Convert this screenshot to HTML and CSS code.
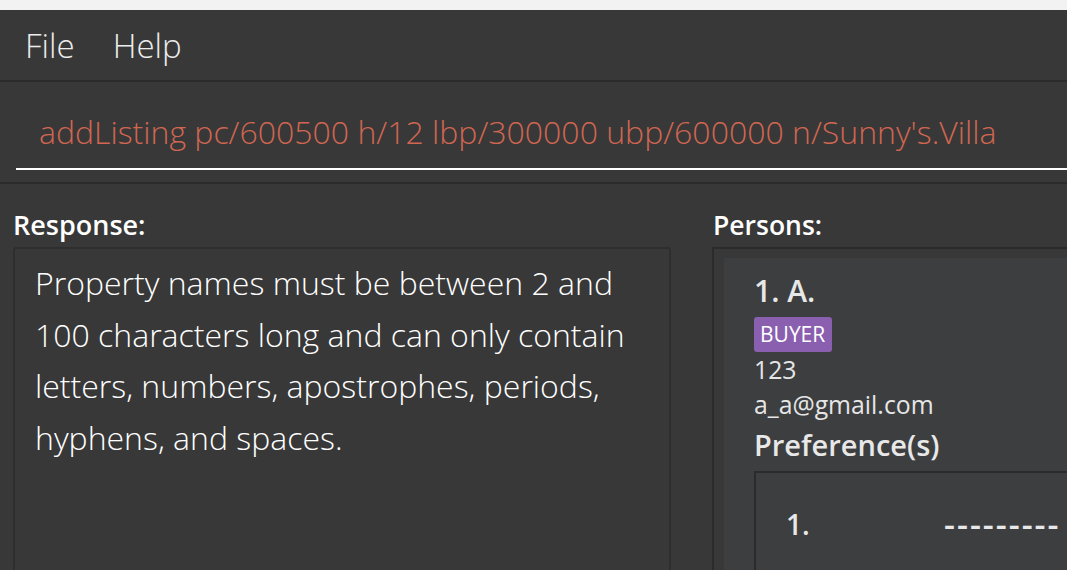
FILE: index.html
```html
<!DOCTYPE html>
<html>
<head>
<meta charset="utf-8">
<link rel="stylesheet" href="styles.css">
</head>
<body>
<div class="titlestrip"></div>
<div class="menubar">
  <span class="menu-item">File</span>
  <span class="menu-item">Help</span>
</div>
<div class="command">
  <div class="command-field">
    <span class="command-text error">addListing pc/600500 h/12 lbp/300000 ubp/600000 n/Sunny's.Villa</span>
  </div>
</div>
<div class="main">
  <section class="pane pane-left">
    <div class="pane-label">Response:</div>
    <div class="result-box">
      <p class="result-text">Property names must be between 2 and 100 characters long and can only contain letters, numbers, apostrophes, periods, hyphens, and spaces.</p>
    </div>
  </section>
  <section class="pane pane-right">
    <div class="pane-label">Persons:</div>
    <div class="list-box">
      <div class="card">
        <div class="card-name">1. A.</div>
        <div class="tags"><span class="tag">BUYER</span></div>
        <div class="card-line">123</div>
        <div class="card-line">a_a@gmail.com</div>
        <div class="card-heading">Preference(s)</div>
        <div class="pref-box">
          <div class="pref-row">
            <span class="pref-index">1.</span>
            <span class="pref-dashes">---------</span>
          </div>
        </div>
      </div>
    </div>
  </section>
</div>
</body>
</html>
```

FILE: styles.css
```css
html, body {
  margin: 0;
  padding: 0;
}
body {
  background: #383838;
  font-family: "Open Sans", "Noto Sans", sans-serif;
  color: #ffffff;
  overflow: hidden;
  width: 1067px;
  height: 570px;
}
.titlestrip {
  height: 10px;
  background: #f2f2f2;
}
.menubar {
  height: 70px;
  display: flex;
  align-items: center;
  padding-left: 25px;
  border-bottom: 2px solid #2b2b2b;
}
.menu-item {
  font-size: 33px;
  font-weight: 300;
  color: #ececec;
  margin-right: 38px;
  line-height: 1;
}
.command {
  height: 100px;
  border-bottom: 2px solid #2b2b2b;
}
.command-field {
  margin-left: 16px;
  height: 88px;
  box-sizing: border-box;
  padding-top: 14px;
  border-bottom: 2px solid #ffffff;
  display: flex;
  align-items: center;
  padding-left: 23px;
  white-space: nowrap;
}
.command-text {
  font-size: 32px;
  font-weight: 300;
  line-height: 1;
}
.error {
  color: #d06651;
}
.main {
  display: flex;
  padding-left: 13px;
  gap: 41px;
  width: 1400px;
}
.pane {
  display: flex;
  flex-direction: column;
}
.pane-left {
  width: 658px;
  flex: none;
}
.pane-right {
  width: 600px;
  flex: none;
}
.pane-label {
  font-size: 27px;
  font-weight: 600;
  color: #ffffff;
  line-height: 30px;
  margin-top: 26px;
  height: 37px;
}
.pane-right .pane-label {
  margin-left: 1px;
  font-size: 26.5px;
}
.result-box {
  height: 400px;
  border: 2px solid #2e2e2e;
  border-radius: 3px;
  padding: 8px 20px;
}
.result-text {
  margin: 0;
  font-size: 32px;
  font-weight: 300;
  line-height: 51.7px;
  color: #ffffff;
}
.list-box {
  height: 400px;
  border: 2px solid #2b2b2b;
  border-right: none;
  padding: 9px 0 0 10px;
}
.card {
  background: #3d3e40;
  height: 400px;
  padding: 14px 0 0 30px;
  display: flex;
  flex-direction: column;
  align-items: flex-start;
}
.card-name {
  font-size: 30px;
  font-weight: 600;
  color: #e8e8e8;
  line-height: 38px;
}
.tags {
  margin-top: 7px;
  display: flex;
}
.tag {
  display: block;
  background: #8a5fb0;
  color: #ffffff;
  font-size: 21px;
  line-height: 35px;
  padding: 0 7px 0 6px;
  border-radius: 3px;
}
.card-line {
  font-size: 24.8px;
  font-weight: 400;
  color: #e6e6e6;
  line-height: 35px;
}
.card-heading {
  margin-top: 3px;
  font-size: 29px;
  font-weight: 600;
  color: #e8e8e8;
  line-height: 40px;
}
.pref-box {
  margin-top: 6px;
  border: 2px solid #2b2b2b;
  border-right: none;
  width: 400px;
  height: 200px;
}
.pref-row {
  display: flex;
  align-items: center;
  height: 102px;
  padding-left: 30px;
}
.pref-index {
  font-size: 28px;
  font-weight: 600;
  color: #e8e8e8;
  width: 158px;
  flex: none;
}
.pref-dashes {
  font-size: 34px;
  font-weight: 600;
  color: #e8e8e8;
  letter-spacing: 2px;
  white-space: nowrap;
  line-height: 1;
}
```
